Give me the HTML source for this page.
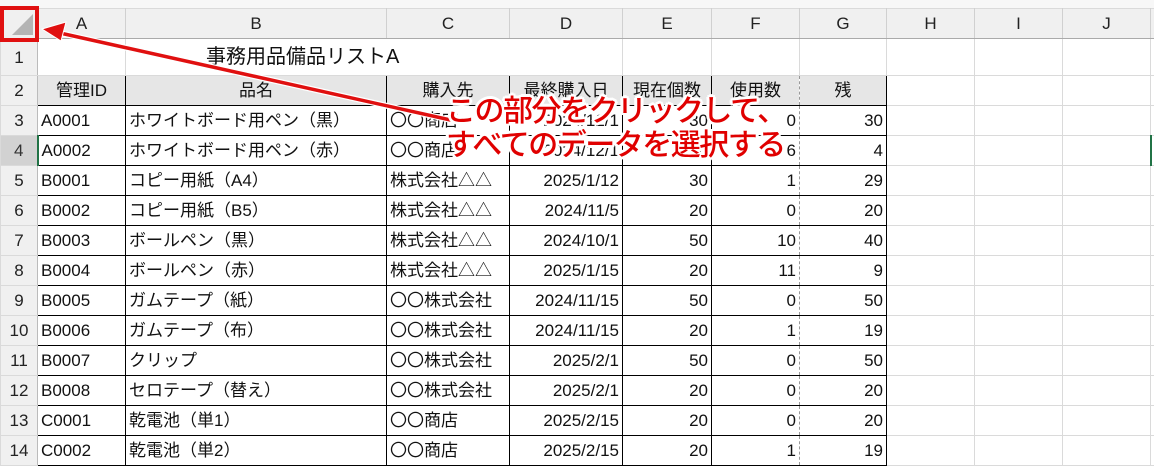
<!DOCTYPE html>
<html style="overflow:hidden;height:469px"><head><meta charset="utf-8">
<style>
body{margin:0;width:1154px;height:469px;overflow:hidden;background:#fff;font-family:"Liberation Sans","Noto Sans CJK JP",sans-serif;position:relative}
.top{position:absolute;left:0;top:0;width:1154px;height:8px;background:#f7f7f7}
table{position:absolute;left:0;top:8px;border-collapse:collapse;table-layout:fixed;width:1154px}
td{border:1px solid #dadada;height:29px;padding:0 3px;font-size:17px;white-space:nowrap;overflow:hidden;color:#111;line-height:29px}
tr.h td{background:#f0f0f0;text-align:center;font-size:17px;border-bottom:1px solid #aaa;border-right:1px solid #d0d0d0;color:#222}
td.rh{background:#f0f0f0;text-align:center;color:#222;border-right:1px solid #bbb;padding:0}
td.sel{background:#d2d2d2;color:#333}
td.d{border:1px solid #000}
td.hd{background:#e6e6e6;text-align:center}
td.r{text-align:right}
td.f{border-right:1px dashed #999}
td.g{border-left:1px dashed #999}
.corner{position:absolute;left:0;top:8px;width:37px;height:30px}
.box{position:absolute;left:0;top:6px;width:31px;height:28px;border:4px solid #e01010}
.call{position:absolute;left:446px;top:91px;font-size:30px;line-height:34px;color:#e00000;font-weight:500;text-shadow:-2px -2px 0 #fff,2px -2px 0 #fff,-2px 2px 0 #fff,2px 2px 0 #fff,0 3px 0 #fff,0 -3px 0 #fff,3px 0 0 #fff,-3px 0 0 #fff;font-family:"Noto Sans CJK JP",sans-serif;letter-spacing:-1.5px}
</style></head><body>
<div class="top"></div>
<table>
<colgroup><col style="width:37px"><col style="width:88px"><col style="width:261px"><col style="width:123px"><col style="width:113px"><col style="width:89px"><col style="width:88px"><col style="width:87px"><col style="width:88px"><col style="width:88px"><col style="width:88px"><col style="width:4px"></colgroup>
<tr class="h"><td></td><td>A</td><td>B</td><td>C</td><td>D</td><td>E</td><td>F</td><td>G</td><td>H</td><td>I</td><td>J</td><td></td></tr>
<tr style="height:37px"><td class="rh" style="height:36px">1</td><td></td><td colspan="3" style="font-size:20px;padding-left:80px;height:36px">事務用品備品リストA</td><td></td><td></td><td></td><td></td><td></td><td></td><td></td></tr>
<tr><td class="rh">2</td><td class="d hd">管理ID</td><td class="d hd">品名</td><td class="d hd">購入先</td><td class="d hd">最終購入日</td><td class="d hd">現在個数</td><td class="d hd f">使用数</td><td class="d hd g">残</td><td></td><td></td><td></td><td></td></tr>
<tr><td class="rh">3</td><td class="d">A0001</td><td class="d">ホワイトボード用ペン（黒）</td><td class="d">〇〇商店</td><td class="d r">2024/12/1</td><td class="d r">30</td><td class="d r f">0</td><td class="d r g">30</td><td></td><td></td><td></td><td></td></tr>
<tr><td class="rh sel">4</td><td class="d" style="border-left:2px solid #217346">A0002</td><td class="d">ホワイトボード用ペン（赤）</td><td class="d">〇〇商店</td><td class="d r">2024/12/1</td><td class="d r">10</td><td class="d r f">6</td><td class="d r g">4</td><td></td><td></td><td></td><td style="border-left:2px solid #217346"></td></tr>
<tr><td class="rh">5</td><td class="d">B0001</td><td class="d">コピー用紙（A4）</td><td class="d">株式会社△△</td><td class="d r">2025/1/12</td><td class="d r">30</td><td class="d r f">1</td><td class="d r g">29</td><td></td><td></td><td></td><td></td></tr>
<tr><td class="rh">6</td><td class="d">B0002</td><td class="d">コピー用紙（B5）</td><td class="d">株式会社△△</td><td class="d r">2024/11/5</td><td class="d r">20</td><td class="d r f">0</td><td class="d r g">20</td><td></td><td></td><td></td><td></td></tr>
<tr><td class="rh">7</td><td class="d">B0003</td><td class="d">ボールペン（黒）</td><td class="d">株式会社△△</td><td class="d r">2024/10/1</td><td class="d r">50</td><td class="d r f">10</td><td class="d r g">40</td><td></td><td></td><td></td><td></td></tr>
<tr><td class="rh">8</td><td class="d">B0004</td><td class="d">ボールペン（赤）</td><td class="d">株式会社△△</td><td class="d r">2025/1/15</td><td class="d r">20</td><td class="d r f">11</td><td class="d r g">9</td><td></td><td></td><td></td><td></td></tr>
<tr><td class="rh">9</td><td class="d">B0005</td><td class="d">ガムテープ（紙）</td><td class="d">〇〇株式会社</td><td class="d r">2024/11/15</td><td class="d r">50</td><td class="d r f">0</td><td class="d r g">50</td><td></td><td></td><td></td><td></td></tr>
<tr><td class="rh">10</td><td class="d">B0006</td><td class="d">ガムテープ（布）</td><td class="d">〇〇株式会社</td><td class="d r">2024/11/15</td><td class="d r">20</td><td class="d r f">1</td><td class="d r g">19</td><td></td><td></td><td></td><td></td></tr>
<tr><td class="rh">11</td><td class="d">B0007</td><td class="d">クリップ</td><td class="d">〇〇株式会社</td><td class="d r">2025/2/1</td><td class="d r">50</td><td class="d r f">0</td><td class="d r g">50</td><td></td><td></td><td></td><td></td></tr>
<tr><td class="rh">12</td><td class="d">B0008</td><td class="d">セロテープ（替え）</td><td class="d">〇〇株式会社</td><td class="d r">2025/2/1</td><td class="d r">20</td><td class="d r f">0</td><td class="d r g">20</td><td></td><td></td><td></td><td></td></tr>
<tr><td class="rh">13</td><td class="d">C0001</td><td class="d">乾電池（単1）</td><td class="d">〇〇商店</td><td class="d r">2025/2/15</td><td class="d r">20</td><td class="d r f">0</td><td class="d r g">20</td><td></td><td></td><td></td><td></td></tr>
<tr><td class="rh">14</td><td class="d">C0002</td><td class="d">乾電池（単2）</td><td class="d">〇〇商店</td><td class="d r">2025/2/15</td><td class="d r">20</td><td class="d r f">1</td><td class="d r g">19</td><td></td><td></td><td></td><td></td></tr>
</table>
<svg class="corner" width="37" height="30" viewBox="0 0 37 30"><polygon points="33,6 33,27 12,27" fill="#b4b4b4"/></svg>
<div class="box"></div>
<svg style="position:absolute;left:0;top:0" width="1154" height="469">
<line x1="455" y1="121" x2="60" y2="33" stroke="#fff" stroke-width="6"/>
<line x1="455" y1="121" x2="60" y2="33" stroke="#e01010" stroke-width="3.5"/>
<polygon points="42,29 66,22 61,41" fill="#e01010" stroke="#fff" stroke-width="1"/>
</svg>
<div class="call">この部分をクリックして、<br>すべてのデータを選択する</div>
</body></html>
